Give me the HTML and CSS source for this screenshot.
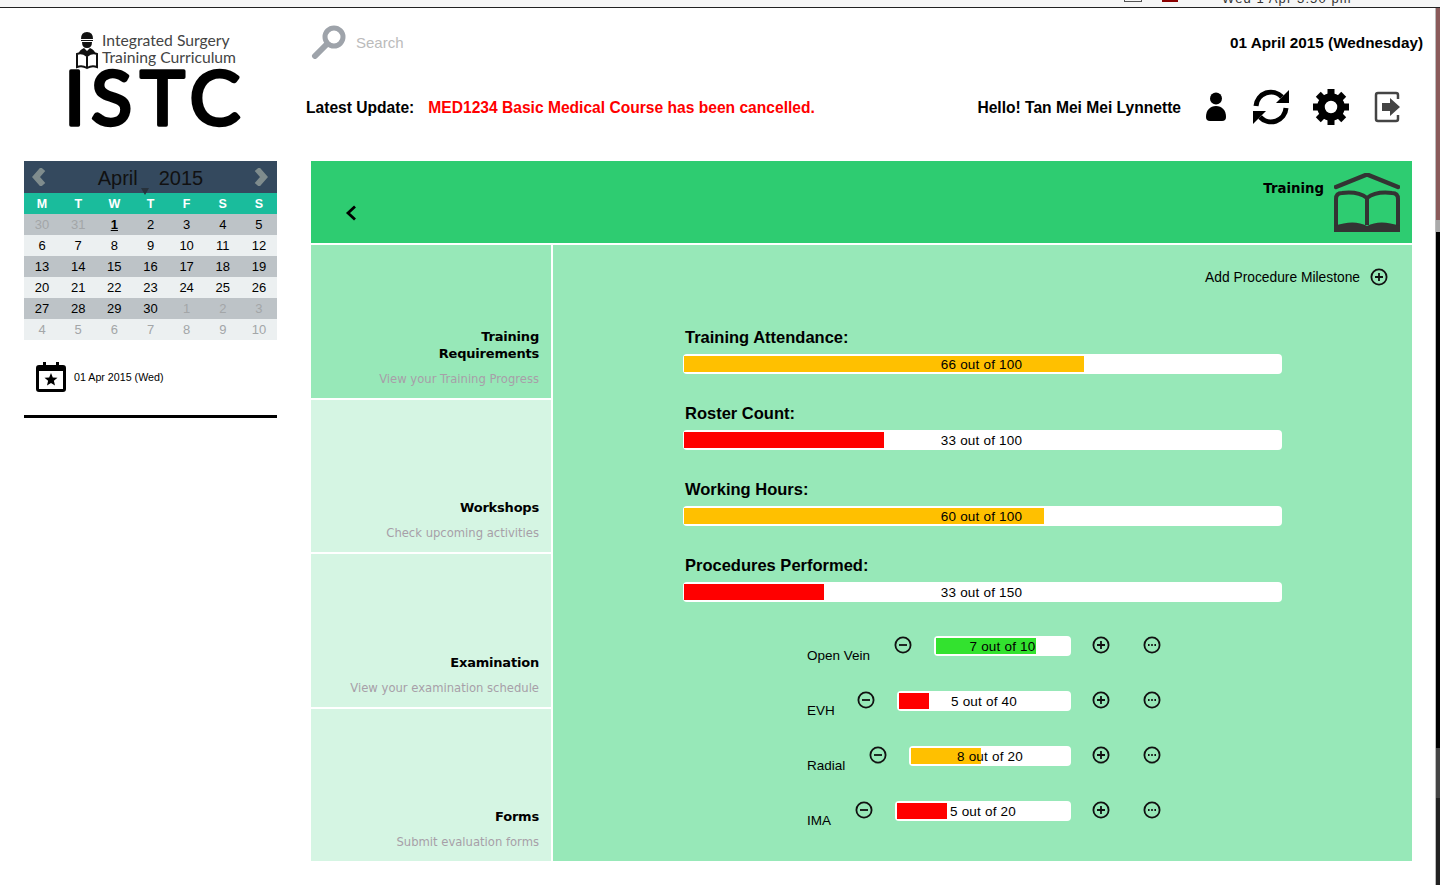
FILE: index.html
```html
<!DOCTYPE html>
<html lang="en">
<head>
  <meta charset="UTF-8" />
  <title>ISTC - Training</title>
  <link rel="stylesheet" href="styles.css">
</head>
<body>
  <div class="menubar">
    <span class="menubar-box"></span>
    <span class="menubar-mark"></span>
    <span class="menubar-clock">Wed 1 Apr 3:50 pm</span>
  </div>

  <div class="screen">
    <div class="window">
      <header class="top">
        <svg class="logo" width="180" height="112" viewBox="0 0 180 112">
          <path d="M15 9 Q15 2 21 2 Q27 2 27 9 Z M15 10 H27 V11 H15 Z M16 12 H26 Q26 18 21 18 Q16 18 16 12 Z" fill="#111"/>
          <path d="M12 25 Q13 20 18 18 L21 21 L24 18 Q29 20 30 25 L21 27 Z" fill="#111"/>
          <path d="M11 24 Q16 22 21 26 Q26 22 31 24 V37 Q26 35 21 38 Q16 35 11 37 Z M21 26 V38" fill="#fff" stroke="#111" stroke-width="2"/>
          <text class="logo-small" x="36" y="16">Integrated Surgery</text>
          <text class="logo-small" x="36" y="33">Training Curriculum</text>
          <text class="logo-big" x="-2 25 74 123.5" y="95">ISTC</text>
        </svg>
        <div class="top-right">
          <div class="top-row">
            <div class="search">
              <svg width="35" height="34" viewBox="0 0 35 34">
                <circle cx="23" cy="12" r="9" fill="none" stroke="#9ea3aa" stroke-width="5"/>
                <line x1="15" y1="20" x2="4" y2="31" stroke="#9ea3aa" stroke-width="6" stroke-linecap="round"/>
              </svg>
              <span>Search</span>
            </div>
            <div class="today">01 April 2015 (Wednesday)</div>
          </div>
          <div class="top-row update-row">
            <div class="update"><b>Latest Update:</b><b class="update-msg">MED1234 Basic Medical Course has been cancelled.</b></div>
            <div class="user">
              <span class="hello">Hello! Tan Mei Mei Lynnette</span>
              <svg class="person" width="20" height="30" viewBox="0 0 20 30">
                <circle cx="10" cy="6.5" r="6"/>
                <path d="M0 25 C0 18 4 14 10 14 C16 14 20 18 20 25 Q20 29 16 29 H4 Q0 29 0 25 Z"/>
              </svg>
              <svg width="36" height="38" viewBox="0 0 36 38">
                <path d="M3 18 A15 15 0 0 1 29 9" fill="none" stroke="#000" stroke-width="5"/>
                <path d="M36 2 V15 H23 Z"/>
                <path d="M33 20 A15 15 0 0 1 7 29" fill="none" stroke="#000" stroke-width="5"/>
                <path d="M0 36 V23 H13 Z"/>
              </svg>
              <svg class="gear" width="36" height="36" viewBox="0 0 36 36">
                <circle cx="18" cy="18" r="10" fill="none" stroke="#000" stroke-width="7.5"/>
                <g>
                  <rect x="14.5" y="0" width="7" height="8"/>
                  <rect x="14.5" y="0" width="7" height="8" transform="rotate(45 18 18)"/>
                  <rect x="14.5" y="0" width="7" height="8" transform="rotate(90 18 18)"/>
                  <rect x="14.5" y="0" width="7" height="8" transform="rotate(135 18 18)"/>
                  <rect x="14.5" y="0" width="7" height="8" transform="rotate(180 18 18)"/>
                  <rect x="14.5" y="0" width="7" height="8" transform="rotate(225 18 18)"/>
                  <rect x="14.5" y="0" width="7" height="8" transform="rotate(270 18 18)"/>
                  <rect x="14.5" y="0" width="7" height="8" transform="rotate(315 18 18)"/>
                </g>
              </svg>
              <svg width="27" height="32" viewBox="0 0 27 32">
                <path d="M24 8 V4 Q24 2 22 2 H4 Q2 2 2 4 V28 Q2 30 4 30 H22 Q24 30 24 28 V24" fill="none" stroke="#444" stroke-width="2.5"/>
                <path d="M8 12 H16 V7 L26 16 L16 25 V20 H8 Z" fill="#444"/>
              </svg>
            </div>
          </div>
        </div>
      </header>

      <div class="layout">
        <aside class="sidebar">
          <div class="calendar">
            <div class="cal-head">
              <svg width="14" height="18" viewBox="0 0 14 18"><path d="M11 1 L4 9 L11 17" fill="none" stroke="#7f8c8d" stroke-width="6"/></svg>
              <div class="cal-title"><span>April</span><span>2015</span><i class="cal-caret"></i></div>
              <svg width="14" height="18" viewBox="0 0 14 18"><path d="M3 1 L10 9 L3 17" fill="none" stroke="#7f8c8d" stroke-width="6"/></svg>
            </div>
            <div class="cal-row cal-days">
              <span>M</span><span>T</span><span>W</span><span>T</span><span>F</span><span>S</span><span>S</span>
            </div>
            <div class="cal-row dark">
              <span class="off">30</span><span class="off">31</span><span class="now">1</span><span>2</span><span>3</span><span>4</span><span>5</span>
            </div>
            <div class="cal-row">
              <span>6</span><span>7</span><span>8</span><span>9</span><span>10</span><span>11</span><span>12</span>
            </div>
            <div class="cal-row dark">
              <span>13</span><span>14</span><span>15</span><span>16</span><span>17</span><span>18</span><span>19</span>
            </div>
            <div class="cal-row">
              <span>20</span><span>21</span><span>22</span><span>23</span><span>24</span><span>25</span><span>26</span>
            </div>
            <div class="cal-row dark">
              <span>27</span><span>28</span><span>29</span><span>30</span><span class="off">1</span><span class="off">2</span><span class="off">3</span>
            </div>
            <div class="cal-row">
              <span class="off">4</span><span class="off">5</span><span class="off">6</span><span class="off">7</span><span class="off">8</span><span class="off">9</span><span class="off">10</span>
            </div>
          </div>
          <div class="picked">
            <svg width="30" height="30" viewBox="0 0 30 30">
              <path d="M3 3 H7 V0 H10 V3 H20 V0 H23 V3 H27 Q30 3 30 6 V27 Q30 30 27 30 H3 Q0 30 0 27 V6 Q0 3 3 3 Z"/>
              <rect x="3" y="9" width="24" height="18" fill="#fff"/>
              <path d="M15 11 L16.8 15.4 L21.5 15.8 L17.9 18.8 L19 23.4 L15 21 L11 23.4 L12.1 18.8 L8.5 15.8 L13.2 15.4 Z"/>
            </svg>
            <span>01 Apr 2015 (Wed)</span>
          </div>
          <div class="side-rule"></div>
        </aside>

        <main class="main">
          <div class="main-head">
            <svg class="back" width="12" height="16" viewBox="0 0 12 16"><path d="M10 1.5 L3 8 L10 14.5" fill="none" stroke="#000" stroke-width="2.8"/></svg>
            <div class="head-title">
              <span>Training</span>
              <svg width="66" height="59" viewBox="0 0 66 59" fill="none" stroke="#333">
                <path d="M2 14 L33 1.5 L64 14" stroke-width="4.5" stroke-linecap="round"/>
                <path d="M2 55 V26 Q2 20 8 20 Q24 18 33 25 Q42 18 58 20 Q64 20 64 26 V55" stroke-width="4"/>
                <path d="M33 25 V52" stroke-width="4"/>
                <path d="M0 59 V53 Q20 46 33 53 Q46 46 66 53 V59 Z" fill="#333" stroke="none"/>
              </svg>
            </div>
          </div>

          <div class="main-body">
            <nav class="nav">
              <a class="nav-item active">
                <b>Training<br>Requirements</b>
                <small>View your Training Progress</small>
              </a>
              <a class="nav-item">
                <b>Workshops</b>
                <small>Check upcoming activities</small>
              </a>
              <a class="nav-item">
                <b>Examination</b>
                <small>View your examination schedule</small>
              </a>
              <a class="nav-item">
                <b>Forms</b>
                <small>Submit evaluation forms</small>
              </a>
            </nav>

            <section class="content">
              <div class="add-row">
                <span>Add Procedure Milestone</span>
                <svg class="circle-icon" viewBox="0 0 18 18"><circle cx="9" cy="9" r="7.6"/><path d="M9 5 V13 M5 9 H13"/></svg>
              </div>

              <div class="stat">
                <h3>Training Attendance:</h3>
                <div class="bar"><div class="fill amber" style="width: 400px"></div><span>66 out of 100</span></div>
              </div>
              <div class="stat">
                <h3>Roster Count:</h3>
                <div class="bar"><div class="fill red" style="width: 200px"></div><span>33 out of 100</span></div>
              </div>
              <div class="stat">
                <h3>Working Hours:</h3>
                <div class="bar"><div class="fill amber" style="width: 360px"></div><span>60 out of 100</span></div>
              </div>
              <div class="stat">
                <h3>Procedures Performed:</h3>
                <div class="bar"><div class="fill red" style="width: 140px"></div><span>33 out of 150</span></div>
              </div>

              <div class="procs">
                <div class="proc">
                  <span class="proc-name">Open Vein</span>
                  <svg class="circle-icon minus" viewBox="0 0 18 18"><circle cx="9" cy="9" r="7.6"/><path d="M5 9 H13"/></svg>
                  <div class="bar" style="width: 137px"><div class="fill green" style="width: 100px"></div><span>7 out of 10</span></div>
                  <svg class="circle-icon plus" viewBox="0 0 18 18"><circle cx="9" cy="9" r="7.6"/><path d="M9 5 V13 M5 9 H13"/></svg>
                  <svg class="circle-icon more" viewBox="0 0 18 18"><circle cx="9" cy="9" r="7.6"/><path d="M5 9 H6.6 M8.2 9 H9.8 M11.4 9 H13"/></svg>
                </div>
                <div class="proc">
                  <span class="proc-name">EVH</span>
                  <svg class="circle-icon minus" viewBox="0 0 18 18"><circle cx="9" cy="9" r="7.6"/><path d="M5 9 H13"/></svg>
                  <div class="bar" style="width: 174px"><div class="fill red" style="width: 30px"></div><span>5 out of 40</span></div>
                  <svg class="circle-icon plus" viewBox="0 0 18 18"><circle cx="9" cy="9" r="7.6"/><path d="M9 5 V13 M5 9 H13"/></svg>
                  <svg class="circle-icon more" viewBox="0 0 18 18"><circle cx="9" cy="9" r="7.6"/><path d="M5 9 H6.6 M8.2 9 H9.8 M11.4 9 H13"/></svg>
                </div>
                <div class="proc">
                  <span class="proc-name">Radial</span>
                  <svg class="circle-icon minus" viewBox="0 0 18 18"><circle cx="9" cy="9" r="7.6"/><path d="M5 9 H13"/></svg>
                  <div class="bar" style="width: 162px"><div class="fill amber" style="width: 70px"></div><span>8 out of 20</span></div>
                  <svg class="circle-icon plus" viewBox="0 0 18 18"><circle cx="9" cy="9" r="7.6"/><path d="M9 5 V13 M5 9 H13"/></svg>
                  <svg class="circle-icon more" viewBox="0 0 18 18"><circle cx="9" cy="9" r="7.6"/><path d="M5 9 H6.6 M8.2 9 H9.8 M11.4 9 H13"/></svg>
                </div>
                <div class="proc">
                  <span class="proc-name">IMA</span>
                  <svg class="circle-icon minus" viewBox="0 0 18 18"><circle cx="9" cy="9" r="7.6"/><path d="M5 9 H13"/></svg>
                  <div class="bar" style="width: 176px"><div class="fill red" style="width: 50px"></div><span>5 out of 20</span></div>
                  <svg class="circle-icon plus" viewBox="0 0 18 18"><circle cx="9" cy="9" r="7.6"/><path d="M9 5 V13 M5 9 H13"/></svg>
                  <svg class="circle-icon more" viewBox="0 0 18 18"><circle cx="9" cy="9" r="7.6"/><path d="M5 9 H6.6 M8.2 9 H9.8 M11.4 9 H13"/></svg>
                </div>
              </div>
            </section>
          </div>
        </main>
      </div>
    </div>
    <div class="desktop-edge"></div>
  </div>
</body>
</html>
```

FILE: styles.css
```css
html, body {
  height: 100%;
  overflow: hidden;
}
body {
  margin: 0;
  background: #fff;
  color: #000;
  font-family: "Liberation Sans", Arial, sans-serif;
}

/* strip of the OS menu bar at the top of the shot */
.menubar {
  height: 7px;
  background: #f6f6f6;
  border-bottom: 1px solid #222;
  display: flex;
  overflow: hidden;
}
.menubar-box {
  width: 18px;
  height: 2px;
  margin-left: 1124px;
  border: 1px solid #555;
  border-top: 0;
  box-sizing: border-box;
}
.menubar-mark {
  width: 16px;
  height: 2px;
  margin-left: 20px;
  background: #8b0000;
}
.menubar-clock {
  margin-left: 44px;
  margin-top: -9px;
  font-size: 13px;
  line-height: 15px;
  color: #333;
  letter-spacing: 1.1px;
}

.screen {
  display: flex;
  height: 877px;
}
.window {
  width: 1436px;
  flex: none;
  border-right: 1px solid #bbb;
  box-sizing: border-box;
}
.desktop-edge {
  flex: 1;
  background: linear-gradient(#8a5a5a 0, #8a5a5a 212px, #aaa 212px, #aaa 224px, #000 224px, #000 740px, #444 740px, #444 790px, #222 790px);
}

/* header */
.top {
  display: flex;
  height: 153px;
}
.logo {
  margin: 22px 0 0 66px;
  flex: none;
  overflow: visible;
}
.logo-small {
  font-family: Lato, sans-serif;
  font-size: 15.7px;
  fill: #444;
}
.logo-big {
  font-family: Lato, sans-serif;
  font-size: 76px;
  stroke: #000;
  stroke-width: 3.5px;
  stroke-linejoin: round;
}
.top-right {
  margin-left: 60px;
  flex: 1;
  padding: 17px 12px 0 0;
}
.top-row {
  display: flex;
  justify-content: space-between;
  align-items: center;
}
.search {
  display: flex;
  align-items: center;
  gap: 10px;
  margin-left: 5px;
  color: #bbb;
  font-size: 15px;
}
.today {
  padding-top: 2px;
  font-size: 15.3px;
  font-weight: bold;
}
.update-row {
  margin-top: 29px;
  padding-right: 22px;
  height: 38px;
  font-size: 15.6px;
}
.update {
  padding-top: 2px;
}
.update-msg {
  color: #f00;
  margin-left: 14px;
}
.user {
  display: flex;
  align-items: center;
  gap: 25px;
}
.hello {
  padding-top: 2px;
  font-weight: bold;
}
.person {
  margin-right: 2px;
}
.gear {
  margin-left: -1px;
}

/* page body */
.layout {
  display: flex;
  padding-left: 24px;
}
.sidebar {
  width: 253px;
  flex: none;
  margin-right: 34px;
}

.cal-head {
  height: 32px;
  background: #34495e;
  display: flex;
  align-items: center;
  justify-content: space-between;
  padding: 0 9px 0 8px;
}
.cal-title {
  position: relative;
  display: flex;
  gap: 21px;
  margin-left: 1px;
  font-size: 20px;
  color: #111;
  padding-top: 2px;
}
.cal-caret {
  position: absolute;
  left: 43px;
  bottom: -5px;
  border: 4px solid transparent;
  border-top: 7px solid #28323c;
  border-bottom: 0;
}
.cal-row {
  display: grid;
  grid-template-columns: repeat(7, 1fr);
  height: 21px;
  line-height: 21px;
  background: #ecf0f1;
  text-align: center;
  font-size: 13px;
}
.cal-row.dark {
  background: #bdc3c7;
}
.cal-row.cal-days {
  background: #1abc9c;
  color: #fff;
  font-weight: bold;
  font-size: 12.5px;
  line-height: 22px;
}
.off {
  color: #a3a6a8;
}
.now {
  font-weight: bold;
  text-decoration: underline;
}
.picked {
  display: flex;
  align-items: center;
  gap: 8px;
  margin: 22px 0 23px 12px;
  font-size: 10.7px;
}
.side-rule {
  height: 3px;
  background: #000;
}

/* main panel */
.main {
  width: 1101px;
  flex: none;
  height: 700px;
  display: flex;
  flex-direction: column;
  gap: 2px;
}
.main-head {
  height: 82px;
  flex: none;
  background: #2ecc71;
  display: flex;
  justify-content: space-between;
  align-items: flex-start;
  box-sizing: border-box;
  padding: 12px 12px 0 34px;
}
.back {
  margin-top: 32px;
}
.head-title {
  display: flex;
  gap: 10px;
  font-family: "DejaVu Sans", sans-serif;
  font-weight: bold;
  font-size: 13.3px;
}
.head-title span {
  margin-top: 8px;
}

.main-body {
  flex: 1;
  display: flex;
  gap: 2px;
}
.nav {
  width: 240px;
  flex: none;
  display: flex;
  flex-direction: column;
  gap: 2px;
}
.nav-item {
  flex: 1;
  background: #d5f5e3;
  display: flex;
  flex-direction: column;
  justify-content: flex-end;
  text-align: right;
  padding: 0 12px 11px 0;
  font-family: "DejaVu Sans", sans-serif;
}
.nav-item.active {
  background: #97e8b8;
}
.nav-item b {
  font-size: 13px;
  letter-spacing: -.2px;
  line-height: 17px;
}
.nav-item small {
  margin-top: 10px;
  font-size: 11.6px;
  line-height: 15px;
  color: #a79fa8;
}

.content {
  flex: 1;
  background: #97e8b8;
  box-sizing: border-box;
  padding: 23px 24px 0 130px;
}
.add-row {
  display: flex;
  justify-content: flex-end;
  align-items: center;
  gap: 10px;
  height: 18px;
  font-size: 13.8px;
  margin-bottom: 41px;
}
.circle-icon {
  width: 18px;
  height: 18px;
  flex: none;
  fill: none;
  stroke: #111;
  stroke-width: 1.8;
}
.stat {
  width: 599px;
  margin-bottom: 29px;
}
.stat h3 {
  margin: 0 0 7px 2px;
  font-size: 16.5px;
  line-height: 20px;
}
.bar {
  position: relative;
  height: 20px;
  box-sizing: border-box;
  padding: 2px;
  background: #fff;
  border-radius: 4px;
  font-size: 13.5px;
  line-height: 20px;
}
.stat .bar {
  padding-left: 1px;
}
.bar span {
  position: absolute;
  top: 1px;
  left: 0;
  right: 0;
  text-align: center;
  letter-spacing: .2px;
}
.stat .bar span {
  right: 2px;
}
.fill {
  height: 16px;
}
.amber { background: #ffc000; }
.red { background: #f00; }
.green { background: #33e22f; }

.procs {
  margin: 34px 0 0 124px;
  width: 354px;
  display: flex;
  flex-direction: column;
  gap: 35px;
}
.proc {
  display: flex;
  height: 20px;
}
.proc-name {
  margin-right: auto;
  margin-top: 10px;
  font-size: 13.5px;
  line-height: 20px;
}
.minus {
  margin-right: 22px;
}
.plus {
  margin-left: 21px;
}
.more {
  margin-left: 33px;
}
```
